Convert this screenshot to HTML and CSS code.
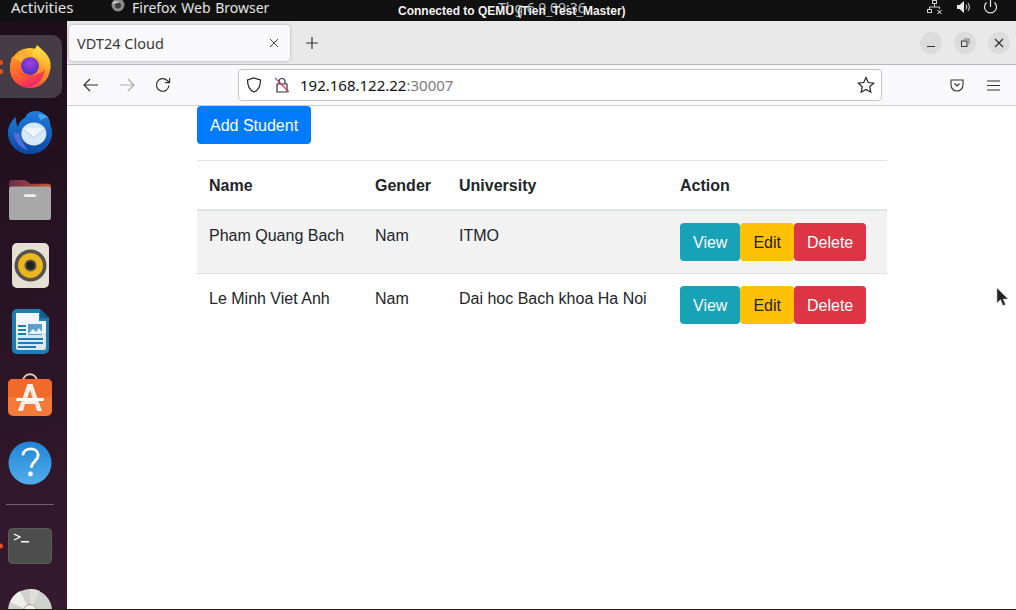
FILE: index.html
```html
<!DOCTYPE html>
<html lang="en">
<head>
    <meta charset="UTF-8">
    <meta name="viewport" content="width=device-width, initial-scale=1.0">
    <title>VDT24 Cloud</title>
    <link rel="stylesheet" href="styles.css">
</head>
<body>
    <!-- gnome top bar -->
    <div class="topbar">
        <span class="activities">Activities</span>
        <span class="app-menu">
            <svg class="app-icon" width="16" height="16" viewBox="0 0 16 16"><circle cx="8" cy="6" r="6.5" fill="#8a8a8a"/><circle cx="8" cy="6.5" r="3" fill="#3c3c3c"/><path d="M2 5c2-4 6-3 7-1-2 0-4 0-7 1z" fill="#d0d0d0"/></svg>
            Firefox Web Browser
        </span>
        <span class="clock">Thg 6 9 09:36</span>
        <span class="vm-title">Connected to QEMU (Tien_Test_Master)</span>
        <span class="tray">
            <svg width="18" height="16" viewBox="0 0 18 16" fill="none" stroke="#cfcfcf" stroke-width="1"><rect x="6.500" y=".5" width="4" height="3"/><rect x="1.500" y="9.500" width="4" height="3"/><path d="M8.500 3.500V7M3.500 9.500V7H13.500V9"/><path d="M11.500 10l4 4M15.500 10l-4 4" stroke="#fff"/></svg>
            <svg width="15" height="14" viewBox="0 0 15 14"><path d="M1 5h2.500L8 1v12L3.500 9H1z" fill="#e8e8e8"/><path d="M10 4.500c1 1.500 1 3.500 0 5M12 3c1.800 2.500 1.800 5.500 0 8" fill="none" stroke="#e8e8e8"/></svg>
            <svg width="15" height="16" viewBox="0 0 15 16" fill="none" stroke="#e8e8e8" stroke-width="1.200"><path d="M7.500 0v7"/><path d="M3.500 2.500a6 6 0 1 0 8 0"/></svg>
        </span>
    </div>

    <div class="desktop">
        <!-- dock -->
        <div class="dock">
            <div class="dock-item active">
                <span class="dots"><i></i><i></i></span>
                <svg width="42" height="43" viewBox="0 0 42 43">
                    <defs>
                        <linearGradient id="ffBody" x1="0.800" y1="0" x2="0.300" y2="1"><stop offset="0" stop-color="#ffd83a"/><stop offset="0.550" stop-color="#ff8a1f"/><stop offset="1" stop-color="#f5236a"/></linearGradient>
                        <linearGradient id="ffFlame" x1="0.500" y1="0" x2="0.500" y2="1"><stop offset="0" stop-color="#ffe24a"/><stop offset="1" stop-color="#ffa726"/></linearGradient>
                        <linearGradient id="ffFox" x1="0" y1="0" x2="0.600" y2="1"><stop offset="0" stop-color="#ff9a24"/><stop offset="0.600" stop-color="#ff5a30"/><stop offset="1" stop-color="#f0246e"/></linearGradient>
                        <radialGradient id="ffGlobe" cx="0.500" cy="0.350" r="0.700"><stop offset="0" stop-color="#a33fe6"/><stop offset="1" stop-color="#4430b8"/></radialGradient>
                    </defs>
                    <circle cx="21" cy="23" r="20" fill="url(#ffBody)"/>
                    <path d="M28 0c-2 5-6 8-6 11 5 0 10 3 12 8 2 3 6 5 7 7 1-3 1-9-1-13-2-5-8-9-12-13z" fill="url(#ffFlame)"/>
                    <circle cx="21" cy="21" r="9" fill="url(#ffGlobe)"/>
                    <path d="M3 12c4-1 9-1 12 2-2 2-4 5-3 9 1 5 7 8 13 7 5-1 9-3 11-6-1 10-9 18-18 18S1 34 1 24c0-5 1-9 2-12z" fill="url(#ffFox)"/>
                    <path d="M4 13c3-4 10-4 16-1-4 0-7 2-8 6-2-3-5-4-8-5z" fill="#ffb22c"/>
                </svg>
            </div>
            <div class="dock-item thunderbird">
                <svg width="48" height="50" viewBox="0 0 50 50">
                    <defs><linearGradient id="tbBlue" x1="0" y1="0" x2="0" y2="1"><stop offset="0" stop-color="#1f7fe0"/><stop offset="1" stop-color="#0d47a1"/></linearGradient></defs>
                    <path d="M10 9c-5 5-8 11-8 17 0 12 10 22 23 22s23-10 23-22c0-3-1-6-2-9 0-5-2-8-5-10-4-4-10-5-15-3-3 1-5 3-6 6-4 2-7 6-8 10-1-4-2-7-2-11z" fill="url(#tbBlue)"/>
                    <path d="M8 25c0 9 7 17 15 19-4-5-8-11-8-17z" fill="#4f6fd8"/>
                    <ellipse cx="29" cy="27" rx="13" ry="12" fill="#d6e9f8"/>
                    <path d="M17 21l12 10 12-10" fill="#eef6fd" stroke="#a8c8e8"/>
                    <path d="M33 7c4-1 8 0 11 3-3 0-6 1-8 3z" fill="#4ea3f0"/>
                </svg>
            </div>
            <div class="dock-item files">
                <svg width="44" height="42" viewBox="0 0 46 44">
                    <defs><linearGradient id="fldBack" x1="0" y1="0" x2="1" y2="0"><stop offset="0" stop-color="#6b2b4e"/><stop offset="1" stop-color="#c4562e"/></linearGradient></defs>
                    <path d="M1 5a3 3 0 0 1 3-3h14l5 4h19a3 3 0 0 1 3 3v12H1z" fill="url(#fldBack)"/>
                    <path d="M1 12a3 3 0 0 1 3-3h38a3 3 0 0 1 3 3v29a3 3 0 0 1-3 3H4a3 3 0 0 1-3-3z" fill="#a8a8a8"/>
                    <rect x="17" y="17" width="12" height="3" rx="1" fill="#f0f0f0"/>
                </svg>
            </div>
            <div class="dock-item rhythmbox">
                <svg width="37" height="45" viewBox="0 0 37 45">
                    <rect width="37" height="45" rx="5" fill="#e4e0d4"/>
                    <circle cx="18.500" cy="22.500" r="16" fill="#55524e"/>
                    <circle cx="18.500" cy="22.500" r="12.500" fill="#eab71c"/>
                    <circle cx="18.500" cy="22.500" r="6" fill="#57534d"/>
                    <circle cx="18.500" cy="22.500" r="4" fill="#222"/>
                </svg>
            </div>
            <div class="dock-item writer">
                <svg width="37" height="45" viewBox="0 0 37 45">
                    <path d="M5 0h23l9 9v31a5 5 0 0 1-5 5H5a5 5 0 0 1-5-5V5a5 5 0 0 1 5-5z" fill="#1d7eb4"/>
                    <path d="M4 4h23v8h7v22H4z" fill="#f3f5f8"/>
                    <path d="M4 24h30v15a2 2 0 0 1-2 2H6a2 2 0 0 1-2-2z" fill="#dbe8f2"/>
                    <path d="M28 0l9 9h-9z" fill="#125f8c"/>
                    <rect x="6" y="16" width="8" height="2" fill="#1d7eb4"/><rect x="6" y="20" width="8" height="2" fill="#1d7eb4"/><rect x="6" y="24" width="8" height="2" fill="#1d7eb4"/>
                    <rect x="16" y="15" width="14" height="11" fill="#5b9fcf"/><path d="M16 25l5-5 3 3 3-4 3 4v2H16z" fill="#e8f2fa"/>
                    <rect x="6" y="29" width="25" height="2" fill="#1d7eb4"/><rect x="6" y="33" width="25" height="2" fill="#1d7eb4"/><rect x="6" y="37" width="18" height="2" fill="#1d7eb4"/>
                </svg>
            </div>
            <div class="dock-item software">
                <svg width="44" height="43" viewBox="0 0 44 43">
                    <path d="M15 8c1-9 13-9 14 0" fill="none" stroke="#f2cfa2" stroke-width="2"/>
                    <rect y="6" width="44" height="37" rx="5" fill="#f47a3a"/>
                    <path d="M0 11a5 5 0 0 1 5-5h34a5 5 0 0 1 5 5v13H0z" fill="#f16a2c"/>
                    <path d="M19.500 11h5L34 38h-5l-2-7H17l-2 7h-5z" fill="#fbeee6"/>
                    <path d="M22 17l-3.500 10h7z" fill="#f47a3a"/>
                    <rect x="8" y="25" width="28" height="3" rx="1.500" fill="#fff"/>
                </svg>
            </div>
            <div class="dock-item help">
                <svg width="44" height="44" viewBox="0 0 46 46">
                    <defs><linearGradient id="helpBlue" x1="0" y1="0" x2="0" y2="1"><stop offset="0" stop-color="#1f84d8"/><stop offset="1" stop-color="#52aeea"/></linearGradient></defs>
                    <circle cx="23" cy="23" r="22.500" fill="url(#helpBlue)"/>
                    <path d="M15.500 15c1-9 16-9 16 0 0 6-7 6-7 13" fill="none" stroke="#fff" stroke-width="3"/>
                    <circle cx="23.500" cy="34.500" r="2.500" fill="#fff"/>
                </svg>
            </div>
            <div class="dock-sep"></div>
            <div class="dock-item terminal">
                <span class="dots"><i></i></span>
                <svg width="44" height="36" viewBox="0 0 44 36">
                    <rect width="43" height="35" x=".5" y=".5" rx="4" fill="#4d4d4d" stroke="#5c5c5c"/>
                    <path d="M6 6l6 3-6 3" fill="none" stroke="#fff" stroke-width="1.300"/>
                    <rect x="13" y="13" width="8" height="1.500" fill="#fff"/>
                </svg>
            </div>
            <div class="dock-item disc">
                <svg width="44" height="20" viewBox="0 0 44 20">
                    <circle cx="22" cy="22" r="22" fill="#d0d0cc"/>
                    <path d="M22 22L2 13A22 22 0 0 1 12 2z" fill="#eeeeec"/>
                    <path d="M22 0a22 22 0 0 1 10 2L22 22z" fill="#dededa"/>
                    <circle cx="22" cy="22" r="6.500" fill="#f4f1e8" stroke="#a89f8c"/>
                </svg>
            </div>
        </div>

        <!-- firefox window -->
        <div class="browser">
            <div class="tabbar">
                <div class="tab">
                    <span class="tab-title">VDT24 Cloud</span>
                    <svg width="10" height="10" viewBox="0 0 10 10" stroke="#444" fill="none"><path d="M1 1l8 8M9 1l-8 8"/></svg>
                </div>
                <svg class="new-tab" width="12" height="12" viewBox="0 0 12 12" stroke="#333" stroke-width="1.200"><path d="M6 0v12M0 6h12"/></svg>
                <div class="win-btns">
                    <span class="win-btn"><svg width="10" height="10" viewBox="0 0 10 10" stroke="#333"><path d="M1 8.500h8"/></svg></span>
                    <span class="win-btn"><svg width="10" height="10" viewBox="0 0 10 10" fill="none" stroke="#333"><rect x="1.500" y="3" width="5.500" height="5.500"/><path d="M3.500 1h5.500v5.500" stroke="#777"/></svg></span>
                    <span class="win-btn"><svg width="10" height="10" viewBox="0 0 10 10" stroke="#333" stroke-width="1.300"><path d="M1 1l8 8M9 1l-8 8"/></svg></span>
                </div>
            </div>
            <div class="navbar">
                <svg class="nav-icon" width="16" height="14" viewBox="0 0 16 14" fill="none" stroke="#333" stroke-width="1.200"><path d="M15 7H1M7 1L1 7l6 6"/></svg>
                <svg class="nav-icon" width="16" height="14" viewBox="0 0 16 14" fill="none" stroke="#adadad" stroke-width="1.200"><path d="M1 7h14M9 1l6 6-6 6"/></svg>
                <svg class="nav-icon" width="16" height="16" viewBox="0 0 16 16" fill="none" stroke="#333" stroke-width="1.200"><path d="M14 8.500A6.300 6.300 0 1 1 12 3.300L14.500 5.500"/><path d="M14.600 1v4.700H10" fill="none"/></svg>
                <div class="urlbar">
                    <svg width="16" height="16" viewBox="0 0 16 16" fill="none" stroke="#222" stroke-width="1.200"><path d="M8 1l6.500 2c0 6-1.500 10-6.500 12C3 13 1.500 9 1.500 3z"/></svg>
                    <svg class="lock" width="14" height="16" viewBox="0 0 14 16" fill="none"><path d="M4 7V4.500a3 3 0 0 1 6 0V7M2 7h10v8H2z" stroke="#333" stroke-width="1.200"/><path d="M0 1l14 14" stroke="#e0245e" stroke-width="1.200"/></svg>
                    <span class="url">192.168.122.22<span class="port">:30007</span></span>
                    <svg class="star" width="18" height="18" viewBox="0 0 18 18" fill="none" stroke="#222" stroke-width="1.200"><path d="M9 1.500l2.300 5 5.400.6-4 3.700 1.100 5.400L9 13.500l-4.800 2.700 1.100-5.400-4-3.700 5.400-.6z"/></svg>
                </div>
                <div class="nav-right">
                    <svg width="14" height="13" viewBox="0 0 14 13" fill="none" stroke="#333" stroke-width="1.100"><path d="M1 1h12v5a6 6 0 0 1-12 0z"/><path d="M4.500 4.500L7 7l2.500-2.500"/></svg>
                    <svg width="13" height="11" viewBox="0 0 13 11" stroke="#333" stroke-width="1.200"><path d="M0 1h13M0 5.500h13M0 10h13"/></svg>
                </div>
            </div>

            <!-- page -->
            <div class="page">
                <div class="container">
                    <button class="btn btn-primary add-btn">Add Student</button>
                    <table class="table">
                        <thead>
                            <tr>
                                <th class="col-name">Name</th>
                                <th class="col-gender">Gender</th>
                                <th class="col-uni">University</th>
                                <th class="col-action">Action</th>
                            </tr>
                        </thead>
                        <tbody>
                            <tr class="striped">
                                <td>Pham Quang Bach</td>
                                <td>Nam</td>
                                <td>ITMO</td>
                                <td class="action-cell">
                                    <div class="actions">
                                        <button class="btn btn-info">View</button><button class="btn btn-warning">Edit</button><button class="btn btn-danger">Delete</button>
                                    </div>
                                </td>
                            </tr>
                            <tr>
                                <td>Le Minh Viet Anh</td>
                                <td>Nam</td>
                                <td>Dai hoc Bach khoa Ha Noi</td>
                                <td class="action-cell">
                                    <div class="actions">
                                        <button class="btn btn-info">View</button><button class="btn btn-warning">Edit</button><button class="btn btn-danger">Delete</button>
                                    </div>
                                </td>
                            </tr>
                        </tbody>
                    </table>
                </div>
                <svg class="cursor" width="13" height="20" viewBox="0 0 13 20"><path d="M1 1v15l3.500-3.500 2.500 6 2.500-1-2.500-5.500H12z" fill="#222" stroke="#bbb" stroke-width=".6"/></svg>
            </div>
        </div>
    </div>
    <div class="bottom-line"></div>
</body>
</html>
```
FILE: styles.css
```css
* {
    box-sizing: border-box;
}
body {
    margin: 0;
    width: 1016px;
    height: 610px;
    overflow: hidden;
    font-family: "Liberation Sans", Arial, sans-serif;
    font-size: 16px;
    color: #212529;
    background: #fff;
}

/* top bar */
.topbar {
    position: relative;
    height: 21px;
    background: #111;
    color: #e4e4e4;
    font-family: "Noto Sans", sans-serif;
    font-size: 14px;
    line-height: 15px;
    overflow: hidden;
}
.activities {
    position: absolute;
    left: 11px;
    top: 0;
    font-size: 15px;
}
.app-menu {
    position: absolute;
    left: 110px;
    top: 0;
    display: flex;
    gap: 6px;
    white-space: nowrap;
    word-spacing: 1px;
}
.app-icon {
    margin-top: -1px;
}
.clock {
    position: absolute;
    left: 498px;
    top: 0;
    color: #b4c0cc;
    white-space: nowrap;
}
.vm-title {
    position: absolute;
    left: 398px;
    top: 4px;
    font-family: "Liberation Sans", Arial, sans-serif;
    font-size: 12px;
    font-weight: bold;
    color: #f4f4f4;
    white-space: nowrap;
    text-shadow: 0 0 1px #000;
}
.tray {
    position: absolute;
    right: 18px;
    top: 0;
    display: flex;
    gap: 12px;
}

.desktop {
    display: flex;
    height: 588px;
}
.bottom-line {
    height: 1px;
    background: #23251c;
}

/* dock */
.dock {
    width: 67px;
    flex-shrink: 0;
    display: flex;
    flex-direction: column;
    align-items: flex-start;
    padding-top: 14px;
    background: linear-gradient(160deg, #1d0e1a, #361a30);
    overflow: hidden;
}
.dock-item {
    position: relative;
    width: 60px;
    display: flex;
    align-items: center;
    justify-content: center;
    flex-shrink: 0;
}
.dock-item.active {
    width: 62px;
    height: 63px;
    padding-right: 2px;
    background: #463c45;
    border-radius: 0 10px 10px 0;
}
.thunderbird {
    height: 68px;
}
.files {
    height: 65px;
}
.rhythmbox {
    height: 68px;
}
.writer {
    height: 64px;
}
.software {
    height: 62px;
}
.help {
    height: 76px;
}
.dock-sep {
    width: 48px;
    height: 1px;
    margin: 3px 0 0 6px;
    background: #6e5f6b;
    flex-shrink: 0;
}
.terminal {
    height: 82px;
}
.disc {
    height: 20px;
    margin-top: 2px;
}
.dots {
    position: absolute;
    left: -2px;
    top: 50%;
    transform: translateY(-50%);
    display: flex;
    flex-direction: column;
    gap: 4px;
}
.dots i {
    display: block;
    width: 5px;
    height: 5px;
    border-radius: 50%;
    background: #e9501f;
}

/* browser */
.browser {
    flex: 1;
    display: flex;
    flex-direction: column;
    background: #fff;
}
.tabbar {
    height: 44px;
    display: flex;
    align-items: center;
    padding-left: 2px;
    background: #e9e9e9;
    border-bottom: 1px solid #b8b8b8;
}
.tab {
    width: 221px;
    height: 36px;
    display: flex;
    align-items: center;
    justify-content: space-between;
    padding: 1px 11px 0 8px;
    background: #f9f9fb;
    border-radius: 4px;
    box-shadow: 0 0 3px rgba(0, 0, 0, .3);
}
.tab-title {
    font-family: "Noto Sans", sans-serif;
    font-size: 14.500px;
    color: #3a3a3a;
}
.new-tab {
    margin-left: 15px;
    transform: translateX(1px);
}
.win-btns {
    margin-left: auto;
    margin-right: 6px;
    display: flex;
    gap: 12px;
}
.win-btn {
    width: 22px;
    height: 22px;
    border-radius: 50%;
    background: #dcdcdc;
    display: flex;
    align-items: center;
    justify-content: center;
}
.navbar {
    height: 41px;
    display: flex;
    align-items: center;
    padding-left: 16px;
    background: #f9f9fb;
    border-bottom: 1px solid #cfcfcf;
}
.nav-icon {
    margin-right: 20px;
}
.urlbar {
    width: 644px;
    height: 32px;
    margin-left: 47px;
    display: flex;
    align-items: center;
    padding: 0 6px 0 7px;
    background: #fff;
    border: 1px solid #c4c4c4;
    border-radius: 4px;
}
.lock {
    margin-left: 13px;
}
.url {
    margin-left: 11px;
    font-family: "Noto Sans", sans-serif;
    font-size: 15px;
    color: #111;
}
.port {
    color: #7a7a7a;
}
.star {
    margin-left: auto;
}
.nav-right {
    display: flex;
    align-items: center;
    gap: 23px;
    margin-left: 68px;
}

/* page */
.page {
    position: relative;
    flex: 1;
    padding-left: 130px;
}
.container {
    width: 690px;
}
.btn {
    height: 38px;
    padding: 7px 12px 5px;
    font-family: inherit;
    font-size: 16px;
    line-height: 24px;
    border: 1px solid transparent;
    border-radius: 4px;
    color: #fff;
    cursor: pointer;
}
.add-btn {
    display: block;
    margin-bottom: 16px;
}
.btn-primary {
    background: #007bff;
}
.btn-info {
    background: #17a2b8;
}
.btn-warning {
    background: #ffc107;
    color: #212529;
}
.btn-danger {
    background: #dc3545;
}
.table {
    width: 100%;
    table-layout: fixed;
    border-collapse: collapse;
}
.table th,
.table td {
    padding: 13px 12px 11px;
    text-align: left;
    vertical-align: top;
    line-height: 24px;
    border-top: 1px solid #dee2e6;
}
.table th {
    border-bottom: 2px solid #dee2e6;
}
.table td.action-cell {
    padding: 12px;
}
.col-name {
    width: 166px;
}
.col-gender {
    width: 84px;
}
.col-uni {
    width: 221px;
}
.striped {
    background: #f2f2f2;
}
.actions {
    display: flex;
}
.cursor {
    position: absolute;
    left: 929px;
    top: 181px;
}
```
